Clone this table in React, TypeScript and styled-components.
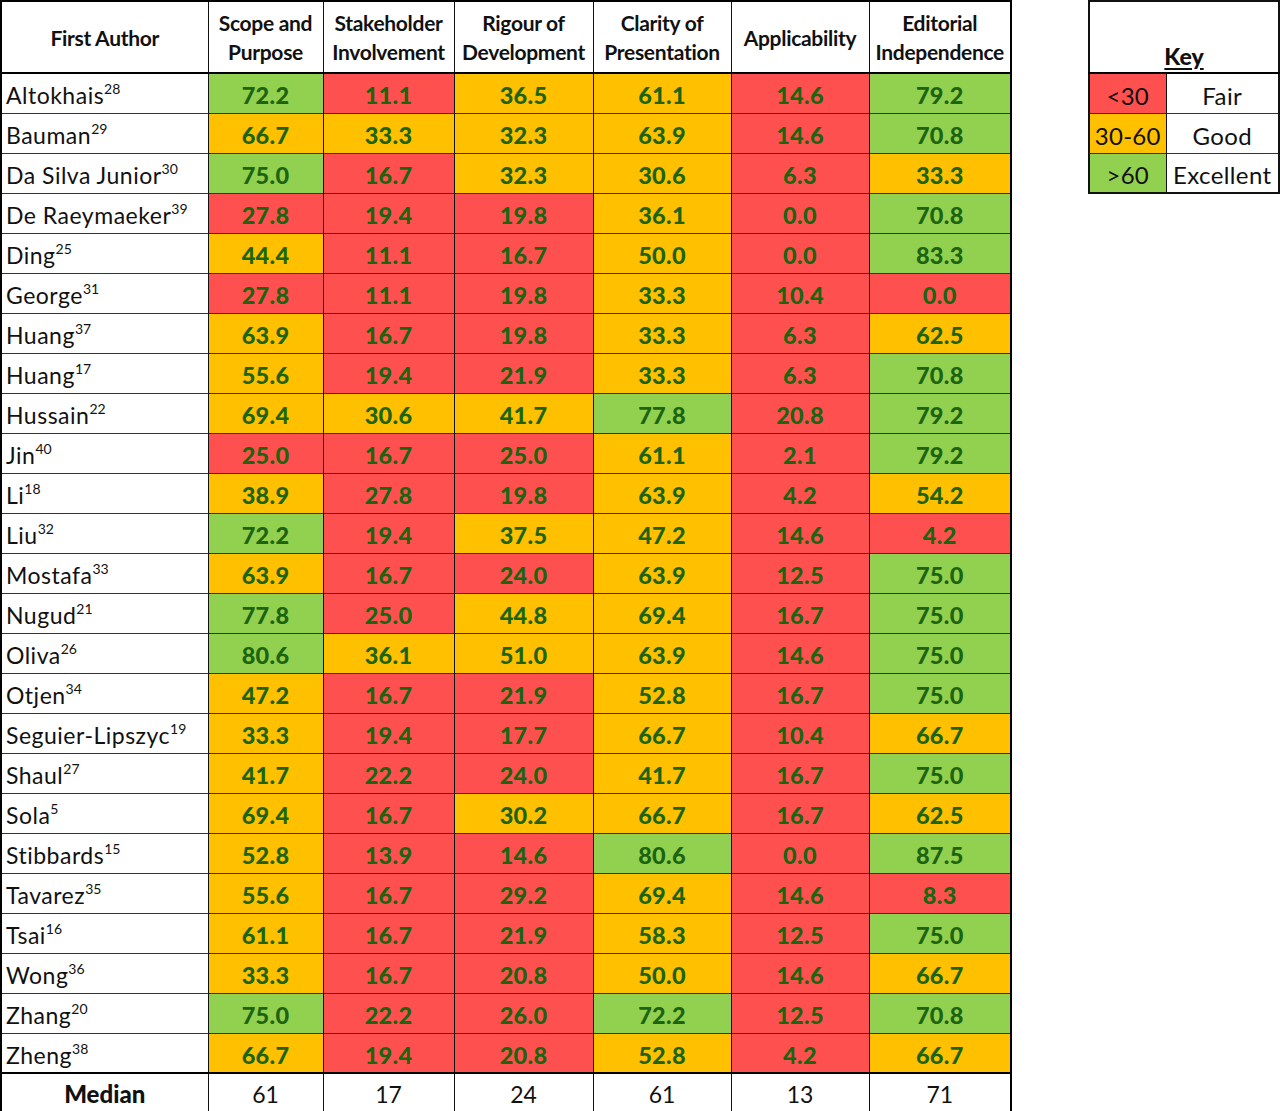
import React from 'react';
import styled, { createGlobalStyle } from 'styled-components';

type Tone = 'r' | 'o' | 'g';

interface Row {
    name: string;
    ref: string;
    cells: [string, Tone][];
}

const toneColor: Record<Tone, string> = {
    r: '#ff5050',
    o: '#ffc000',
    g: '#92d050',
};

const parse = (s: string): [string, Tone][] =>
    s.split(' ').map((c) => {
        const [v, t] = c.split(':');
        return [v, t as Tone];
    });

const rows: Row[] = [
    { name: 'Altokhais', ref: '28', cells: parse('72.2:g 11.1:r 36.5:o 61.1:o 14.6:r 79.2:g') },
    { name: 'Bauman', ref: '29', cells: parse('66.7:o 33.3:o 32.3:o 63.9:o 14.6:r 70.8:g') },
    { name: 'Da Silva Junior', ref: '30', cells: parse('75.0:g 16.7:r 32.3:o 30.6:o 6.3:r 33.3:o') },
    { name: 'De Raeymaeker', ref: '39', cells: parse('27.8:r 19.4:r 19.8:r 36.1:o 0.0:r 70.8:g') },
    { name: 'Ding', ref: '25', cells: parse('44.4:o 11.1:r 16.7:r 50.0:o 0.0:r 83.3:g') },
    { name: 'George', ref: '31', cells: parse('27.8:r 11.1:r 19.8:r 33.3:o 10.4:r 0.0:r') },
    { name: 'Huang', ref: '37', cells: parse('63.9:o 16.7:r 19.8:r 33.3:o 6.3:r 62.5:o') },
    { name: 'Huang', ref: '17', cells: parse('55.6:o 19.4:r 21.9:r 33.3:o 6.3:r 70.8:g') },
    { name: 'Hussain', ref: '22', cells: parse('69.4:o 30.6:o 41.7:o 77.8:g 20.8:r 79.2:g') },
    { name: 'Jin', ref: '40', cells: parse('25.0:r 16.7:r 25.0:r 61.1:o 2.1:r 79.2:g') },
    { name: 'Li', ref: '18', cells: parse('38.9:o 27.8:r 19.8:r 63.9:o 4.2:r 54.2:o') },
    { name: 'Liu', ref: '32', cells: parse('72.2:g 19.4:r 37.5:o 47.2:o 14.6:r 4.2:r') },
    { name: 'Mostafa', ref: '33', cells: parse('63.9:o 16.7:r 24.0:r 63.9:o 12.5:r 75.0:g') },
    { name: 'Nugud', ref: '21', cells: parse('77.8:g 25.0:r 44.8:o 69.4:o 16.7:r 75.0:g') },
    { name: 'Oliva', ref: '26', cells: parse('80.6:g 36.1:o 51.0:o 63.9:o 14.6:r 75.0:g') },
    { name: 'Otjen', ref: '34', cells: parse('47.2:o 16.7:r 21.9:r 52.8:o 16.7:r 75.0:g') },
    { name: 'Seguier-Lipszyc', ref: '19', cells: parse('33.3:o 19.4:r 17.7:r 66.7:o 10.4:r 66.7:o') },
    { name: 'Shaul', ref: '27', cells: parse('41.7:o 22.2:r 24.0:r 41.7:o 16.7:r 75.0:g') },
    { name: 'Sola', ref: '5', cells: parse('69.4:o 16.7:r 30.2:o 66.7:o 16.7:r 62.5:o') },
    { name: 'Stibbards', ref: '15', cells: parse('52.8:o 13.9:r 14.6:r 80.6:g 0.0:r 87.5:g') },
    { name: 'Tavarez', ref: '35', cells: parse('55.6:o 16.7:r 29.2:r 69.4:o 14.6:r 8.3:r') },
    { name: 'Tsai', ref: '16', cells: parse('61.1:o 16.7:r 21.9:r 58.3:o 12.5:r 75.0:g') },
    { name: 'Wong', ref: '36', cells: parse('33.3:o 16.7:r 20.8:r 50.0:o 14.6:r 66.7:o') },
    { name: 'Zhang', ref: '20', cells: parse('75.0:g 22.2:r 26.0:r 72.2:g 12.5:r 70.8:g') },
    { name: 'Zheng', ref: '38', cells: parse('66.7:o 19.4:r 20.8:r 52.8:o 4.2:r 66.7:o') },
];

const headers = [
    ['Scope and', 'Purpose'],
    ['Stakeholder', 'Involvement'],
    ['Rigour of', 'Development'],
    ['Clarity of', 'Presentation'],
    ['Applicability'],
    ['Editorial', 'Independence'],
];

const colWidths = [207, 115, 131, 139, 138, 138, 142];
const medians = ['61', '17', '24', '61', '13', '71'];

const keyRows: { range: string; label: string; tone: Tone }[] = [
    { range: '<30', label: 'Fair', tone: 'r' },
    { range: '30-60', label: 'Good', tone: 'o' },
    { range: '>60', label: 'Excellent', tone: 'g' },
];

const App = () => {
    return (
        <>
            <GlobalStyle />
            <PageWrapper>
                <ScoreTable>
                    <colgroup>
                        {colWidths.map((w, i) => (
                            <col key={i} style={{ width: w }} />
                        ))}
                    </colgroup>
                    <thead>
                        <HeadRow>
                            <HeadCell>First Author</HeadCell>
                            {headers.map((lines, i) => (
                                <HeadCell key={i}>
                                    {lines.map((l, j) => (
                                        <div key={j}>{l}</div>
                                    ))}
                                </HeadCell>
                            ))}
                        </HeadRow>
                    </thead>
                    <tbody>
                        {rows.map((row, i) => (
                            <BodyRow key={i}>
                                <NameCell>
                                    {row.name}
                                    <Ref>{row.ref}</Ref>
                                </NameCell>
                                {row.cells.map(([v, t], j) => (
                                    <ScoreCell key={j} $tone={t}>
                                        {v}
                                    </ScoreCell>
                                ))}
                            </BodyRow>
                        ))}
                        <MedianRow>
                            <MedianLabel>Median</MedianLabel>
                            {medians.map((m, i) => (
                                <MedianCell key={i}>{m}</MedianCell>
                            ))}
                        </MedianRow>
                    </tbody>
                </ScoreTable>

                <KeyTable>
                    <colgroup>
                        <col style={{ width: 77 }} />
                        <col style={{ width: 113 }} />
                    </colgroup>
                    <thead>
                        <KeyHeadRow>
                            <KeyTitle colSpan={2}>
                                <span>Key</span>
                            </KeyTitle>
                        </KeyHeadRow>
                    </thead>
                    <tbody>
                        {keyRows.map((k) => (
                            <BodyRow key={k.range}>
                                <KeySwatch $tone={k.tone}>{k.range}</KeySwatch>
                                <KeyLabel>{k.label}</KeyLabel>
                            </BodyRow>
                        ))}
                    </tbody>
                </KeyTable>
            </PageWrapper>
        </>
    );
};

export default App;

const GlobalStyle = createGlobalStyle`
    body {
        margin: 0;
        background: white;
        font-family: Lato, "Open Sans", "Liberation Sans", sans-serif;
        color: #111;
    }
`;

const PageWrapper = styled.div`
    display: flex;
    align-items: flex-start;
    gap: 76px;
    width: 1280px;
    height: 1111px;
    overflow: hidden;
`;

const ScoreTable = styled.table`
    border-collapse: collapse;
    table-layout: fixed;
    width: 1010px;
    border: 2px solid #000;
`;

const HeadRow = styled.tr`
    height: 72px;
    border-bottom: 2px solid #000;
`;

const HeadCell = styled.th`
    border-left: 1.5px solid #111;
    padding: 0;
    font-size: 21px;
    font-weight: 700;
    line-height: 29px;
    text-align: center;
    vertical-align: middle;
    letter-spacing: -0.3px;
    white-space: nowrap;
    color: #111;
`;

const BodyRow = styled.tr`
    height: 40px;
    border-bottom: 1px solid #333;
`;

const NameCell = styled.td`
    padding: 4px 0 0 4px;
    font-size: 23px;
    letter-spacing: 0.5px;
    white-space: nowrap;
    vertical-align: middle;
    color: #111;
`;

const Ref = styled.sup`
    font-size: 14px;
    letter-spacing: 0;
    vertical-align: 10px;
    line-height: 0;
`;

const ScoreCell = styled.td<{ $tone: Tone }>`
    border-left: 1.5px solid #111;
    background: ${(p) => toneColor[p.$tone]};
    padding: 4px 0 0;
    text-align: center;
    font-size: 23.5px;
    font-weight: 900;
    letter-spacing: 0.3px;
    color: #1c6410;
`;

const MedianRow = styled.tr`
    height: 39px;
    border-top: 2px solid #000;
`;

const MedianLabel = styled.td`
    padding: 2px 0 0;
    text-align: center;
    font-size: 24px;
    font-weight: 900;
`;

const MedianCell = styled.td`
    border-left: 1.5px solid #111;
    padding: 2px 0 0;
    text-align: center;
    font-size: 23px;
`;

const KeyTable = styled.table`
    border-collapse: collapse;
    table-layout: fixed;
    width: 190px;
    border: 2px solid #111;
`;

const KeyHeadRow = styled.tr`
    height: 72px;
    border-bottom: 2px solid #000;
`;

const KeyTitle = styled.th`
    padding: 0 0 2px;
    vertical-align: bottom;
    text-align: center;
    font-size: 23px;
    font-weight: 900;
    > span {
        text-decoration: underline;
        text-underline-offset: 3px;
    }
`;

const KeySwatch = styled.td<{ $tone: Tone }>`
    background: ${(p) => toneColor[p.$tone]};
    padding: 4px 0 0;
    text-align: center;
    font-size: 24px;
    letter-spacing: 0.3px;
`;

const KeyLabel = styled.td`
    border-left: 1.5px solid #111;
    padding: 4px 0 0;
    text-align: center;
    font-size: 24px;
    letter-spacing: 0.4px;
`;
